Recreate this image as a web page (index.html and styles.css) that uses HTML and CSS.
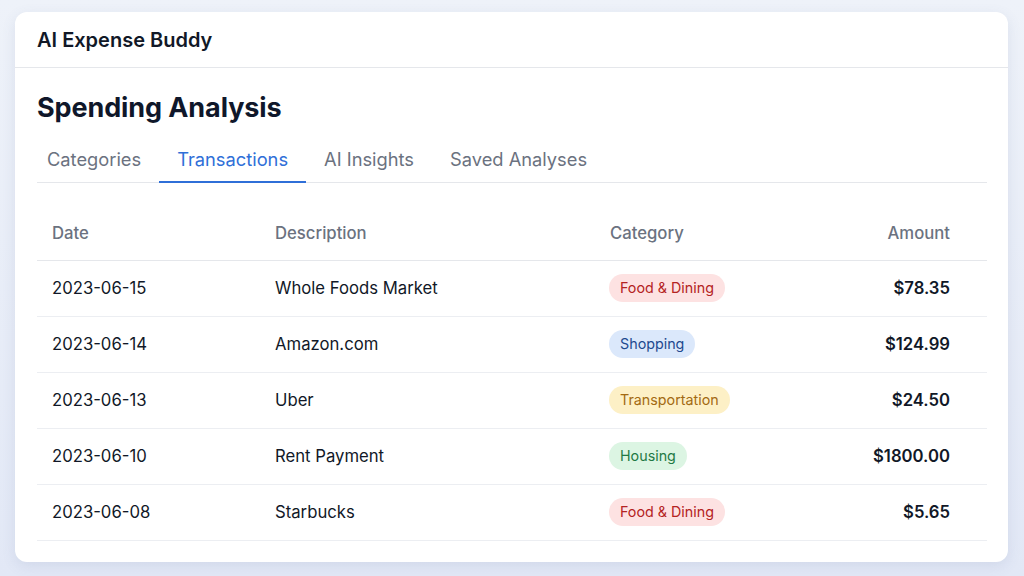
FILE: index.html
```html
<!DOCTYPE html>
<html lang="en">
<head>
  <meta charset="UTF-8">
  <title>AI Expense Buddy</title>
  <link rel="stylesheet" href="styles.css">
</head>
<body>
  <div class="card">
    <div class="app-header">AI Expense Buddy</div>

    <div class="content">
      <h1>Spending Analysis</h1>

      <div class="tabs">
        <div class="tab">Categories</div>
        <div class="tab active">Transactions</div>
        <div class="tab">AI Insights</div>
        <div class="tab">Saved Analyses</div>
      </div>

      <table class="tx-table">
        <thead>
          <tr>
            <th class="col-date">Date</th>
            <th class="col-desc">Description</th>
            <th class="col-cat">Category</th>
            <th class="col-amount">Amount</th>
          </tr>
        </thead>
        <tbody>
          <tr>
            <td>2023-06-15</td>
            <td>Whole Foods Market</td>
            <td><span class="badge food">Food &amp; Dining</span></td>
            <td class="amount">$78.35</td>
          </tr>
          <tr>
            <td>2023-06-14</td>
            <td>Amazon.com</td>
            <td><span class="badge shopping">Shopping</span></td>
            <td class="amount">$124.99</td>
          </tr>
          <tr>
            <td>2023-06-13</td>
            <td>Uber</td>
            <td><span class="badge transport">Transportation</span></td>
            <td class="amount">$24.50</td>
          </tr>
          <tr>
            <td>2023-06-10</td>
            <td>Rent Payment</td>
            <td><span class="badge housing">Housing</span></td>
            <td class="amount">$1800.00</td>
          </tr>
          <tr>
            <td>2023-06-08</td>
            <td>Starbucks</td>
            <td><span class="badge food">Food &amp; Dining</span></td>
            <td class="amount">$5.65</td>
          </tr>
        </tbody>
      </table>
    </div>
  </div>
</body>
</html>
```

FILE: styles.css
```css
html, body {
  height: 100%;
}
body {
  font-family: 'Inter', 'Noto Sans', sans-serif;
  background: linear-gradient(180deg, #eef2f9, #e2e8f6);
  margin: 0;
  padding: 12px 16px 14px 15px;
  box-sizing: border-box;
  color: #111827;
}
.card {
  background: #fff;
  border-radius: 12px;
  box-shadow: 0 4px 14px rgba(80, 100, 150, 0.12);
  height: 550px;
  box-sizing: border-box;
  overflow: hidden;
}
.app-header {
  height: 56px;
  display: flex;
  align-items: center;
  padding: 0 22px;
  font-size: 20px;
  font-weight: 600;
  color: #111827;
  border-bottom: 1px solid #e5e7eb;
  box-sizing: border-box;
}
.content {
  padding: 0 21px 0 22px;
}
h1 {
  margin: 23px 0 0;
  font-size: 27px;
  line-height: 34px;
  font-weight: 700;
  color: #0f172a;
  letter-spacing: -0.1px;
}
.tabs {
  display: flex;
  margin-top: 9px;
  border-bottom: 1px solid #e5e7eb;
}
.tab {
  padding: 13px 18px 10px;
  font-size: 18.3px;
  line-height: 24px;
  color: #6b7280;
  border-bottom: 2px solid transparent;
  margin-bottom: -1px;
}
.tab:first-child {
  padding-left: 10px;
}
.tab.active {
  color: #2f6fd8;
  border-bottom-color: #2f6fd8;
}
.tx-table {
  width: 100%;
  border-collapse: collapse;
  margin-top: 24px;
  font-size: 16.7px;
}
.tx-table th {
  text-align: left;
  font-weight: 500;
  color: #6b7280;
  height: 53px;
  padding: 0 15px;
  border-bottom: 1px solid #e5e7eb;
  box-sizing: border-box;
}
.tx-table td {
  height: 56px;
  padding: 0 15px;
  border-bottom: 1px solid #eceef2;
  box-sizing: border-box;
  color: #111827;
}
.tx-table th.col-date { width: 223px; }
.tx-table th.col-desc { width: 335px; }
.tx-table th.col-cat { width: 200px; }
.tx-table th.col-amount,
.tx-table td.amount {
  text-align: right;
  padding-right: 37px;
}
.tx-table td.amount {
  font-weight: 600;
}
.badge {
  display: inline-block;
  padding: 0 11px;
  height: 28px;
  line-height: 28px;
  border-radius: 14px;
  font-size: 14.3px;
  margin-left: -1px;
}
.badge.food {
  background: #fde2e2;
  color: #b42323;
}
.badge.shopping {
  background: #dbe8fb;
  color: #1e4a8f;
}
.badge.transport {
  background: #fdf0c6;
  color: #a36a12;
}
.badge.housing {
  background: #dcf5e3;
  color: #1f7a45;
}
```
